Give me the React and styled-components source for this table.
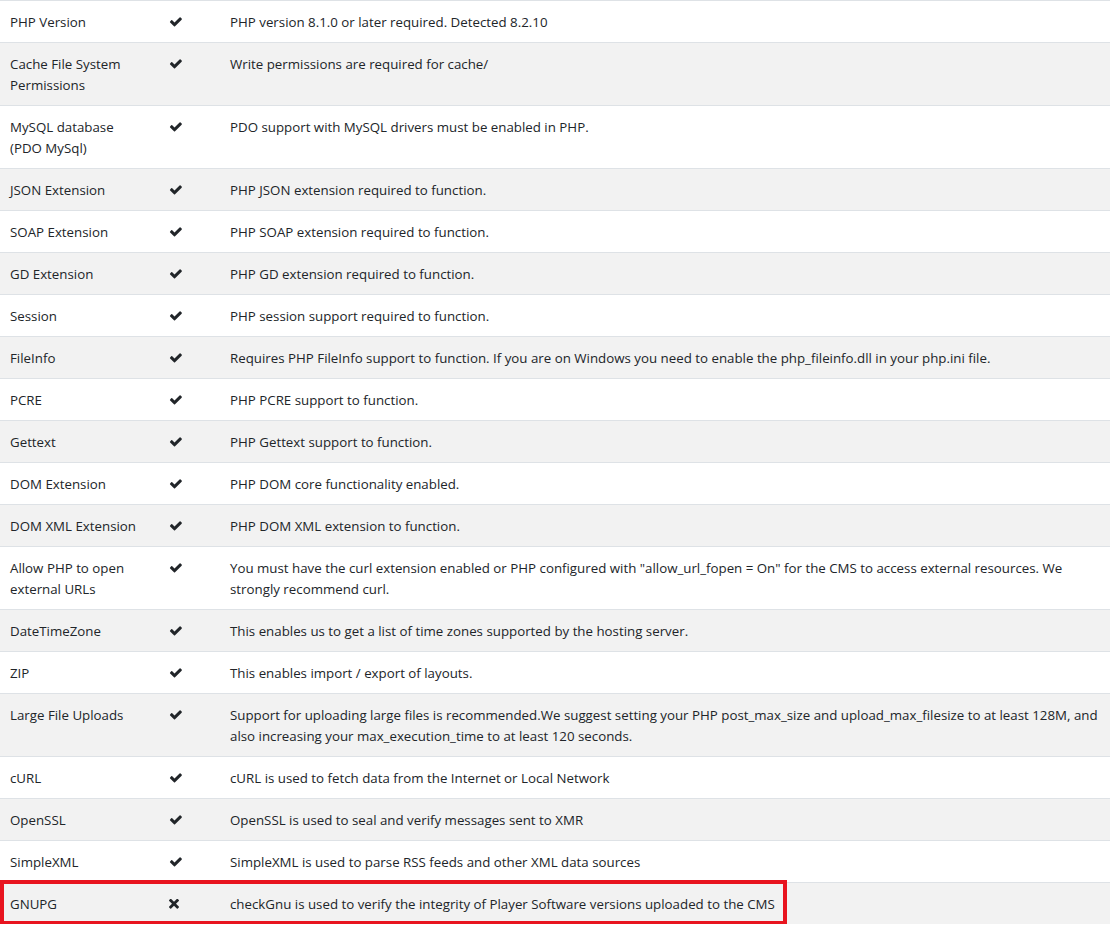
import React from "react";
import styled, { createGlobalStyle } from "styled-components";

const Global = createGlobalStyle`
  html, body { margin: 0; padding: 0; background: #ffffff; }
  body {
    font-family: "Open Sans", "Noto Sans", "Liberation Sans", sans-serif;
    font-size: 13.3px;
    line-height: 21px;
    color: #212529;
  }
`;

const Table = styled.table`
  width: 1110px;
  border-collapse: collapse;
  table-layout: fixed;
`;

const Row = styled.tr`
  background: ${(p) => (p.$striped ? "#f2f2f2" : "#ffffff")};
`;

const Cell = styled.td`
  padding: 11px 10px 9px;
  border-top: 1px solid #dee2e6;
  vertical-align: top;
  text-align: left;
  position: ${(p) => (p.$anchor ? "relative" : "static")};
`;

const IconCell = styled(Cell)`
  padding-top: 16px;
  padding-bottom: 4px;
  line-height: 0;
`;

const Highlight = styled.span`
  position: absolute;
  left: 0;
  top: -3px;
  width: 787px;
  height: 45px;
  box-sizing: border-box;
  border: 4px solid #e8141f;
  pointer-events: none;
`;

const Icon = styled.svg`
  display: block;
  width: ${(p) => p.$w}px;
  height: ${(p) => p.$h}px;
  fill: #212529;
`;

const Check = () => (
  <Icon viewBox="0 0 1688 1200" $w={13} $h={10}>
    <path d="M1671 226q0 40-28 68l-724 724-136 136q-28 28-68 28t-68-28l-136-136-362-362q-28-28-28-68t28-68l136-136q28-28 68-28t68 28l294 295 656-657q28-28 68-28t68 28l136 136q28 28 28 68z" />
  </Icon>
);

const Cross = () => (
  <Icon viewBox="0 0 1362 1362" $w={10} $h={10}>
    <path d="M1362 1100q0 40-28 68l-136 136q-28 28-68 28t-68-28l-381-381-381 381q-28 28-68 28t-68-28l-136-136q-28-28-28-68t28-68l381-381-381-381q-28-28-28-68t28-68l136-136q28-28 68-28t68 28l381 381 381-381q28-28 68-28t68 28l136 136q28 28 28 68t-28 68l-381 381 381 381q28 28 28 68z" />
  </Icon>
);

const rows = [
  ["PHP Version", true, "PHP version 8.1.0 or later required. Detected 8.2.10"],
  ["Cache File System Permissions", true, "Write permissions are required for cache/"],
  ["MySQL database (PDO\u00a0MySql)", true, "PDO support with MySQL drivers must be enabled in PHP."],
  ["JSON Extension", true, "PHP JSON extension required to function."],
  ["SOAP Extension", true, "PHP SOAP extension required to function."],
  ["GD Extension", true, "PHP GD extension required to function."],
  ["Session", true, "PHP session support required to function."],
  ["FileInfo", true, "Requires PHP FileInfo support to function. If you are on Windows you need to enable the php_fileinfo.dll in your php.ini file."],
  ["PCRE", true, "PHP PCRE support to function."],
  ["Gettext", true, "PHP Gettext support to function."],
  ["DOM Extension", true, "PHP DOM core functionality enabled."],
  ["DOM XML Extension", true, "PHP DOM XML extension to function."],
  ["Allow PHP to open external URLs", true, "You must have the curl extension enabled or PHP configured with \"allow_url_fopen = On\" for the CMS to access external resources. We strongly recommend curl."],
  ["DateTimeZone", true, "This enables us to get a list of time zones supported by the hosting server."],
  ["ZIP", true, "This enables import / export of layouts."],
  ["Large File Uploads", true, "Support for uploading large files is recommended.We suggest setting your PHP post_max_size and upload_max_filesize to at least 128M, and also increasing your max_execution_time to at least 120 seconds."],
  ["cURL", true, "cURL is used to fetch data from the Internet or Local Network"],
  ["OpenSSL", true, "OpenSSL is used to seal and verify messages sent to XMR"],
  ["SimpleXML", true, "SimpleXML is used to parse RSS feeds and other XML data sources"],
  ["GNUPG", false, "checkGnu is used to verify the integrity of Player Software versions uploaded to the CMS", true],
];

export default function App() {
  return (
    <>
      <Global />
      <Table>
        <colgroup>
          <col style={{ width: 159 }} />
          <col style={{ width: 61 }} />
          <col />
        </colgroup>
        <tbody>
          {rows.map(([name, ok, desc, hl], i) => (
            <Row key={name} $striped={i % 2 === 1}>
              <Cell $anchor={hl}>
                {hl && <Highlight />}
                {name}
              </Cell>
              <IconCell>{ok ? <Check /> : <Cross />}</IconCell>
              <Cell>{desc}</Cell>
            </Row>
          ))}
        </tbody>
      </Table>
    </>
  );
}
